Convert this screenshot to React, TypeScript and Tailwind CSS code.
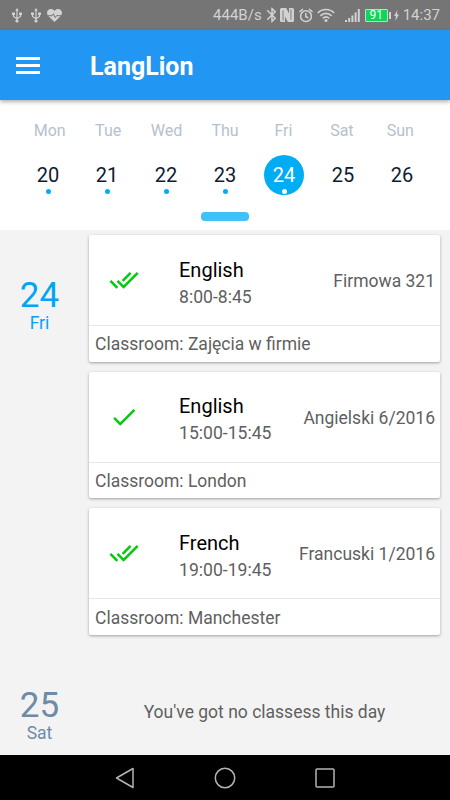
import React from 'react'
import { MdBluetooth, MdDone, MdDoneAll } from 'react-icons/md'

interface Lesson {
  name: string;
  hours: string;
  group: string;
  classroom: string;
  confirmed: boolean;
}

interface WeekDay {
  name: string;
  day: number;
  hasLessons: boolean;
}

const week: WeekDay[] = [
  { name: 'Mon', day: 20, hasLessons: true },
  { name: 'Tue', day: 21, hasLessons: true },
  { name: 'Wed', day: 22, hasLessons: true },
  { name: 'Thu', day: 23, hasLessons: true },
  { name: 'Fri', day: 24, hasLessons: true },
  { name: 'Sat', day: 25, hasLessons: false },
  { name: 'Sun', day: 26, hasLessons: false },
]

const lessons: Lesson[] = [
  { name: 'English', hours: '8:00-8:45', group: 'Firmowa 321', classroom: 'Zajęcia w firmie', confirmed: true },
  { name: 'English', hours: '15:00-15:45', group: 'Angielski 6/2016', classroom: 'London', confirmed: false },
  { name: 'French', hours: '19:00-19:45', group: 'Francuski 1/2016', classroom: 'Manchester', confirmed: true },
]

const selectedDay = 24

const UsbIcon = () => (
  <svg width="10" height="15" viewBox="0 0 10 15" fill="none" stroke="currentColor">
    <path d="M5 2v11M1.5 5.5v3L5 10.7l3.5-2.2v-3" strokeWidth="1.2" />
    <path d="M5 0l1.8 2.8H3.2zM0 4.5h3v2.4H0zM7 4.5h3v2.4H7z" fill="currentColor" stroke="none" />
    <circle cx="5" cy="13" r="1.6" fill="currentColor" stroke="none" />
  </svg>
)

const HeartIcon = () => (
  <svg width="15" height="13" viewBox="0 0 15 13">
    <path d="M7.5 13L1.3 7C-.4 5.2-.3 2.5 1 1.2 2.7-.5 5.7-.4 7.5 1.9 9.3-.4 12.3-.5 14 1.2c1.3 1.3 1.4 4-.3 5.8z" fill="currentColor" />
    <path d="M.5 6.7h4.7l1.2-2 1.8 4 1.2-2h5.1" fill="none" stroke="#757575" strokeWidth="1" />
  </svg>
)

const NfcIcon = () => (
  <svg width="14" height="14" viewBox="0 0 14 14">
    <rect width="14" height="14" rx="1.5" fill="currentColor" />
    <path d="M2.6 2.2h.9v10.3h-.9zM10.5 1.5h.9v10.3h-.9zM6.2 0L9 5.5V0zM7.8 14L5 8.5V14z" fill="#757575" />
  </svg>
)

const AlarmIcon = () => (
  <svg width="14" height="15" viewBox="0 0 14 15" fill="none" stroke="currentColor" strokeWidth="1.5">
    <circle cx="7" cy="8.2" r="5.4" />
    <path d="M6.8 5v3.5l2.5 1.5M.5 3.8L4 1M13.5 3.8L10 1" />
  </svg>
)

const WifiIcon = () => (
  <svg width="18" height="14" viewBox="0 0 18 14" fill="none" stroke="currentColor" strokeWidth="1.7">
    <path d="M.8 5c4.6-4.7 11.8-4.7 16.4 0M3.4 7.8c3.2-3.2 8-3.2 11.2 0M5.9 10.3c1.8-1.7 4.4-1.7 6.2 0" />
    <circle cx="9" cy="12.4" r="1.5" fill="currentColor" stroke="none" />
  </svg>
)

const SignalIcon = () => (
  <svg width="15" height="13" viewBox="0 0 15 13" fill="currentColor">
    <path d="M0 11h2v2H0zM3.2 9h2v4h-2zM6.4 6.5h2V13h-2zM9.6 3.5h2V13h-2zM12.8 0h2v13h-2z" />
  </svg>
)

const StatusBar = () => (
  <div className="flex h-[30px] shrink-0 items-center bg-[#757575] text-[#d2d2d2]">
    <div className="flex items-center pl-3">
      <UsbIcon />
      <span className="w-[9px]" />
      <UsbIcon />
      <span className="w-[6px]" />
      <HeartIcon />
    </div>
    <div className="ml-auto flex items-center pr-[10px] text-[15px] leading-none">
      <span className="pt-px">444B/s</span>
      <MdBluetooth className="ml-[1px] -mr-px size-[18px]" />
      <NfcIcon />
      <span className="w-[5px]" />
      <AlarmIcon />
      <span className="w-[4px]" />
      <WifiIcon />
      <span className="w-[10px]" />
      <SignalIcon />
      <div className="ml-[5px] flex h-[13px] w-[23px] items-center justify-center rounded-[1px] border border-[#d2d2d2] bg-[#0bd858] text-[12px] leading-none text-white">
        91
      </div>
      <span className="ml-px h-[7px] w-[2px] bg-[#d2d2d2]" />
      <svg width="5" height="11" viewBox="0 0 5 11" className="mr-[4px] ml-[3px]" fill="currentColor">
        <path d="M3.5 0L0 6h2l-.8 5L5 4.5H2.9z" />
      </svg>
      <span className="pt-px">14:37</span>
    </div>
  </div>
)

const WeekCalendar = () => (
  <section className="flex h-[130px] shrink-0 flex-col items-center bg-white pt-[19px]">
    <div className="grid w-[409px] grid-cols-7 text-center text-base text-[#b5c1cd]">
      {week.map(({ name }) => <span key={name}>{name}</span>)}
    </div>
    <div className="mt-3 grid w-[413px] grid-cols-7 justify-items-center">
      {week.map(({ day, hasLessons }) => (
        <div
          key={day}
          className={`flex size-10 flex-col items-center rounded-full pt-[5px] text-xl leading-[30px] ${day === selectedDay ? 'bg-[#00adf5] text-white' : 'text-[#101a30]'}`}
        >
          <span className="h-[28.5px]">{day}</span>
          {hasLessons && (
            <span className={`size-[5px] rounded-full ${day === selectedDay ? 'bg-white' : 'bg-[#00adf5]'}`} />
          )}
        </div>
      ))}
    </div>
    <div className="mt-[17px] h-[9px] w-[48px] rounded-[4px] bg-[#40c1f8]" />
  </section>
)

const LessonCard: React.FC<Lesson> = ({ name, hours, group, classroom, confirmed }) => (
  <article className="flex h-[126.7px] flex-col rounded-[2px] bg-white shadow-[0_1px_3px_rgba(0,0,0,0.35)]">
    <div className="flex h-[90px] items-center pr-[5px] pl-5">
      {confirmed
        ? <MdDoneAll className="size-[30px] text-[#00cc0a]" />
        : <MdDone className="size-[30px] text-[#00cc0a]" />}
      <div className="ml-10 flex flex-col pt-[5px]">
        <span className="text-xl leading-[28px] text-black">{name}</span>
        <span className="text-[17.6px] leading-[26px]">{hours}</span>
      </div>
      <span className="ml-auto pt-[2px] text-[17.5px] whitespace-nowrap">{group}</span>
    </div>
    <div className="flex flex-1 items-center border-t border-[#e6e6e6] pt-[1px] pl-[6px] text-[17.5px]">
      Classroom: {classroom}
    </div>
  </article>
)

const DayLabel: React.FC<{ day: number; name: string; className: string }> = ({ day, name, className }) => (
  <div className={`flex w-[79px] shrink-0 flex-col items-center ${className}`}>
    <span className="text-[35px] leading-[36px]">{day}</span>
    <span className="text-[17.5px] leading-[18px]">{name}</span>
  </div>
)

export default function App() {
  return (
    <main className="flex h-[800px] w-[450px] flex-col overflow-hidden bg-[#f3f3f3] font-['Roboto',sans-serif] text-[#5f5f5f]">
      <StatusBar />
      <header className="z-10 flex h-[70px] shrink-0 items-center bg-[#2196f3] pl-4 text-white shadow-[0_2px_4px_rgba(0,0,0,0.3)]">
        <button className="flex w-6 flex-col gap-[4px]">
          <span className="h-[3px] w-full bg-white" />
          <span className="h-[3px] w-full bg-white" />
          <span className="h-[3px] w-full bg-white" />
        </button>
        <h1 className="ml-[50px] pt-[4px] text-[25px] font-bold">LangLion</h1>
      </header>
      <WeekCalendar />
      <div className="flex h-[525px] shrink-0 flex-col">
        <section className="flex pt-[5px] pr-[10px]">
          <DayLabel day={24} name="Fri" className="mr-[10px] pt-[43px] text-[#00a6f5]" />
          <div className="flex flex-1 flex-col gap-[10px]">
            {lessons.map((lesson) => <LessonCard key={lesson.hours} {...lesson} />)}
          </div>
        </section>
        <section className="flex pt-[53px]">
          <DayLabel day={25} name="Sat" className="text-[#6d8ba7]" />
          <p className="flex-1 pt-[11px] text-center text-[17.5px]">You've got no classess this day</p>
        </section>
      </div>
      <nav className="flex h-[45px] shrink-0 items-center justify-center bg-black text-[#b4b4b4]">
        <svg width="20" height="22" viewBox="0 0 20 22" fill="none" stroke="currentColor" strokeWidth="1.5" strokeLinejoin="round">
          <path d="M1.5 11L18 1.5v19z" />
        </svg>
        <svg className="mx-[79px]" width="22" height="22" viewBox="0 0 22 22" fill="none" stroke="currentColor" strokeWidth="1.5">
          <circle cx="11" cy="11" r="9.7" />
        </svg>
        <svg width="20" height="20" viewBox="0 0 20 20" fill="none" stroke="currentColor" strokeWidth="1.5">
          <rect x="1" y="1" width="18" height="18" rx="1" />
        </svg>
      </nav>
    </main>
  )
}
